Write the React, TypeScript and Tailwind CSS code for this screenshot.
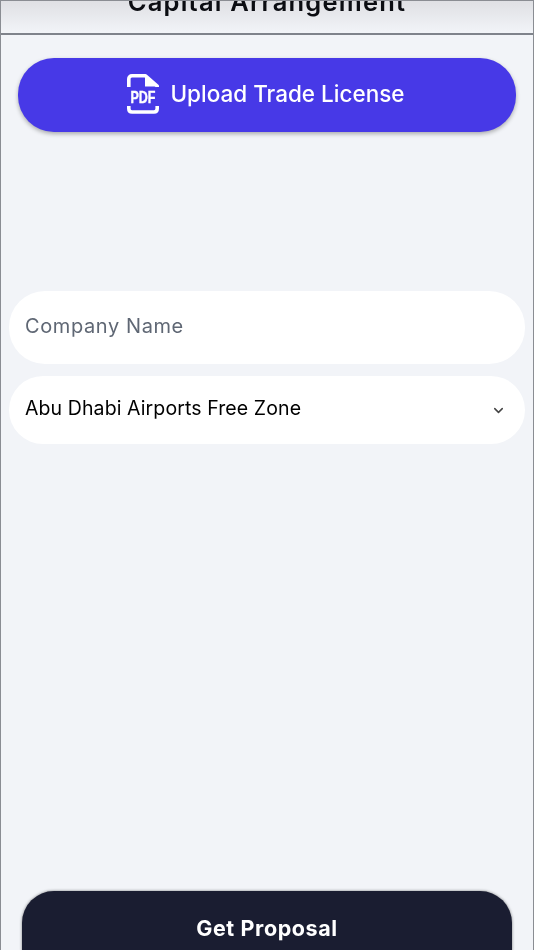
import React from "react";
import { ChevronDown } from "lucide-react";

function PdfIcon() {
  return (
    <svg width="32" height="40" viewBox="0 0 32 40" fill="none" className="shrink-0">
      <path
        d="M1.8 13V5C1.8 3 3 1.8 5 1.8H18.5L30.2 12V13"
        stroke="white"
        strokeWidth="3.6"
        strokeLinejoin="round"
      />
      <path d="M18 1.8V12.5H30.5L18 1.8Z" fill="white" />
      <path
        d="M1.8 32V34.5C1.8 36.8 3 38 5 38H27C29 38 30.2 36.8 30.2 34.5V32"
        stroke="white"
        strokeWidth="3.6"
      />
      <text
        x="16"
        y="28.5"
        fill="white"
        stroke="white"
        strokeWidth="0.4"
        textAnchor="middle"
        fontFamily="'Liberation Sans', sans-serif"
        fontWeight="700"
        fontSize="17"
        textLength="25"
        lengthAdjust="spacingAndGlyphs"
      >
        PDF
      </text>
    </svg>
  );
}

export default function App() {
  return (
    <div className="h-[950px] w-[534px] overflow-hidden border-x border-t border-[#8a8d93] bg-[#f2f4f8] font-['Inter',sans-serif] blur-[0.5px]">
      <header className="h-[34px] overflow-hidden border-b-2 border-[#7f838b] bg-gradient-to-b from-[#dfe0e4] to-[#f2f4f8] text-center">
        <h1 className="mt-[-13px] text-[25.5px] leading-[28px] font-semibold tracking-[1.2px] text-[#0b0d12]">
          Capital Arrangement
        </h1>
      </header>

      <div className="flex flex-col">
        <button className="mx-[17px] mt-[23px] flex h-[74px] items-center justify-center gap-[11px] rounded-[36px] bg-[#4739e7] pr-[2px] pb-[2px] text-[22.5px] font-medium text-white shadow-[0_2px_4px_rgba(0,0,0,0.3)]">
          <PdfIcon />
          <span>Upload Trade License</span>
        </button>

        <div className="mx-[8px] mt-[159px] flex h-[73px] items-center rounded-[36px] bg-white px-[16px] pb-[4px] text-[20px] tracking-[0.6px] text-[#5f6774]">
          Company Name
        </div>

        <div className="mx-[8px] mt-3 flex h-[68px] items-center justify-between rounded-[34px] bg-white pr-[19px] pl-[16px] pb-[3px] text-[19.5px] tracking-[0.1px] text-black">
          <span>Abu Dhabi Airports Free Zone</span>
          <ChevronDown size={15} strokeWidth={2.4} className="mt-[3px] text-[#444]" />
        </div>

        <button className="mx-[21px] mt-[447px] flex h-[90px] justify-center rounded-[32px] bg-[#1a1d31] pt-[21px] text-[21.5px] font-bold tracking-[0.6px] text-white shadow-[0_0_3px_rgba(0,0,0,0.5)]">
          Get Proposal
        </button>
      </div>
    </div>
  );
}
